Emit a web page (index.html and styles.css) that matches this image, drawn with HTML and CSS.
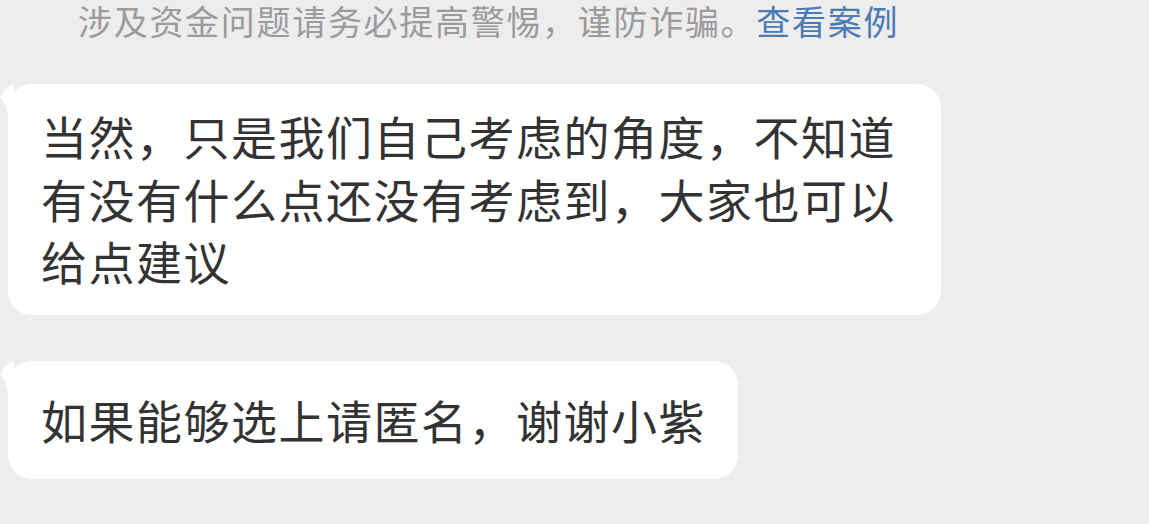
FILE: index.html
```html
<!DOCTYPE html>
<html>
<head>
<meta charset="utf-8">
<title>聊天</title>
<link rel="stylesheet" href="styles.css">
</head>
<body>
  <div id="chat">
    <div class="notice">
      涉及资金问题请务必提高警惕，谨防诈骗。<a class="notice_link">查看案例</a>
    </div>
    <div class="msg">
      <div class="bubble">
        <svg class="tail" width="14" height="40" viewBox="0 0 14 40">
          <path d="M14,0 Q5,2 0,14 Q7,18 9,40 L14,40 Z" fill="#ffffff"/>
        </svg>
        当然，只是我们自己考虑的角度，不知道有没有什么点还没有考虑到，大家也可以给点建议
      </div>
    </div>
    <div class="msg">
      <div class="bubble short">
        <svg class="tail" width="14" height="40" viewBox="0 0 14 40">
          <path d="M14,0 Q5,2 0,14 Q7,18 9,40 L14,40 Z" fill="#ffffff"/>
        </svg>
        如果能够选上请匿名，谢谢小紫
      </div>
    </div>
  </div>
</body>
</html>
```

FILE: styles.css
```css
html, body {
  margin: 0;
  background-color: #ededed;
}
body {
  font-family: "Noto Sans CJK SC", "Noto Sans", sans-serif;
  height: 524px;
  overflow: hidden;
}
#chat {
  padding: 0 8px;
}
.notice {
  color: #9b9b9b;
  font-size: 34px;
  letter-spacing: 1.7px;
  line-height: 42px;
  padding-left: 70px;
  margin-bottom: 42px;
  white-space: nowrap;
}
.notice_link {
  color: #4b7ab4;
  cursor: pointer;
}
.msg {
  display: flex;
  margin-bottom: 46px;
}
.bubble {
  position: relative;
  background-color: #ffffff;
  color: #333333;
  font-size: 46px;
  letter-spacing: 1.5px;
  line-height: 62.5px;
  border-radius: 24px;
  padding: 20px 32px 23px 33px;
  max-width: 868px;
}
.bubble.short {
  padding-top: 27px;
  padding-bottom: 29px;
}
.tail {
  position: absolute;
  left: -8px;
  top: 0;
}
```
